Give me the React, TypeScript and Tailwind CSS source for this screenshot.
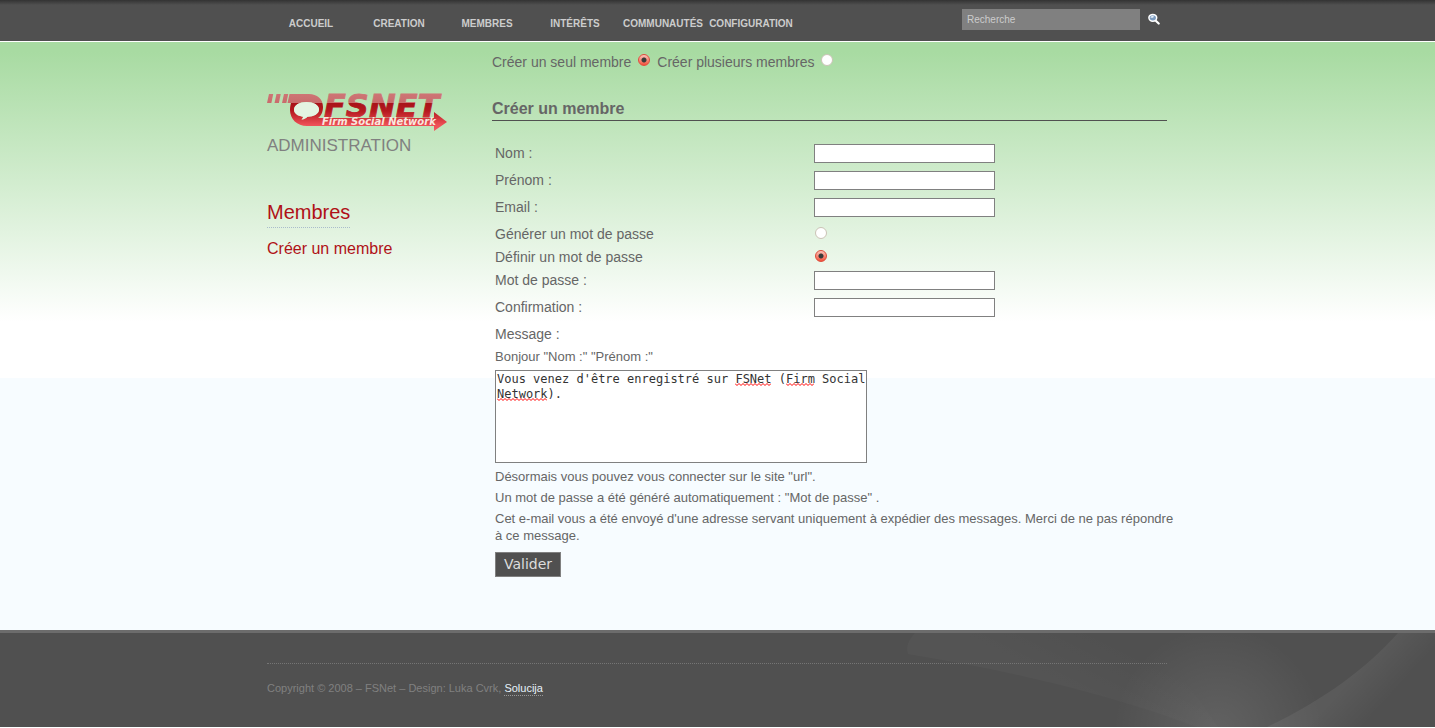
import React, { useState } from "react";

const navItems = ["Accueil", "Creation", "Membres", "Intérêts", "Communautés", "Configuration"];

const radioClass =
  "block size-3 shrink-0 cursor-pointer appearance-none rounded-full border border-[#cbc3b6] bg-white checked:border-[#dc4a38] checked:bg-[radial-gradient(circle_at_center,#3a3a3a_0_2px,transparent_3px),linear-gradient(#fbc4ba,#f4523c)]";

const fieldClass = "h-[19px] w-full max-w-[181px] border border-[#808080] bg-white px-1 text-[13px] outline-none";

function Logo() {
  return (
    <svg viewBox="0 0 180 40" className="block h-10 w-[180px]" role="img" aria-label="FSNet">
      <defs>
        <linearGradient id="brand" gradientUnits="userSpaceOnUse" x1="0" y1="0" x2="0" y2="40">
          <stop offset="0" stopColor="#cf7878" />
          <stop offset="0.29" stopColor="#c96c6c" />
          <stop offset="0.3" stopColor="#a81219" />
          <stop offset="0.5" stopColor="#b5191f" />
          <stop offset="0.85" stopColor="#ee5057" />
          <stop offset="1" stopColor="#f05a60" />
        </linearGradient>
      </defs>
      <g fill="url(#brand)">
        <path d="M2 3H6.200L4.400 12H0Z" />
        <path d="M9.500 3H13.700L11.900 12H7.500Z" />
        <path d="M17 3H21.200L19.400 12H15Z" />
        <path
          fillRule="evenodd"
          d="M22.500 3H42C50 3 56 8 56 16C56 21 54 25 51 27H167V21L180 31L167 40V35H40C30 35 23 28 23 19C23 16 23.500 14 24 12H20.500ZM39.500 11C32.500 11 27 14 27 18.500C27 22.500 30.500 25 36 25.700C36 27 35.500 27.500 34.500 28.500C37.500 28.300 39 27.200 40.500 25.800C47 25.500 52 22.800 52 18.500C52 14 46.500 11 39.500 11Z"
        />
        <text x="57" y="26" fontSize="32" fontWeight="bold" fontStyle="italic" fontFamily="'DejaVu Sans', sans-serif" stroke="url(#brand)" strokeWidth="0.8">
          FSNET
        </text>
      </g>
      <path
        d="M39.500 11C32.500 11 27 14 27 18.500C27 22.500 30.500 25 36 25.700C36 27 35.500 27.500 34.500 28.500C37.500 28.300 39 27.200 40.500 25.800C47 25.500 52 22.800 52 18.500C52 14 46.500 11 39.500 11Z"
        fill="#e4f4e2"
      />
      <text x="55" y="34" fontSize="10" fontWeight="bold" fontStyle="italic" fontFamily="'DejaVu Sans', sans-serif" fill="#f9e6df">
        Firm Social Network
      </text>
    </svg>
  );
}

function SearchIcon() {
  return (
    <svg viewBox="0 0 12 12" className="block size-3" aria-hidden="true">
      <path d="M7.500 7.500L10.700 10.500" stroke="#fff" strokeWidth="2.200" strokeLinecap="round" />
      <ellipse cx="4.800" cy="4.800" rx="3.900" ry="3.400" fill="#7d9cc0" stroke="#fff" strokeWidth="1.500" />
      <path d="M2.500 4.800C2.700 3.400 4 2.600 5.800 2.900L5.200 4.800Z" fill="#e6eff9" />
    </svg>
  );
}

function Squiggle({ className, width }: { className: string; width: number }) {
  const points = Array.from({ length: width / 2 + 1 }, (_, i) => `${i * 2},${i % 2 ? 2.5 : 0.5}`).join(" ");
  return (
    <svg width={width} height="3" className={`pointer-events-none absolute ${className}`} aria-hidden="true">
      <polyline points={points} fill="none" stroke="#f00" strokeWidth="1" />
    </svg>
  );
}

function TextRow({ id, label, type = "text" }: { id: string; label: string; type?: string }) {
  return (
    <div className="grid grid-cols-[319px_1fr] py-1">
      <label htmlFor={id} className="leading-[18px]">{label}</label>
      <input id={id} type={type} className={fieldClass} />
    </div>
  );
}

function RadioRow({ id, label, checked, onSelect }: { id: string; label: string; checked: boolean; onSelect: () => void }) {
  return (
    <div className="grid h-[23px] grid-cols-[319px_1fr] pt-1">
      <label htmlFor={id} className="leading-[18px]">{label}</label>
      <div className="pt-0.5 pl-px">
        <input id={id} name="password-mode" type="radio" checked={checked} onChange={onSelect} className={radioClass} />
      </div>
    </div>
  );
}

export default function App() {
  const [count, setCount] = useState("one");
  const [mode, setMode] = useState("define");
  const [message, setMessage] = useState("Vous venez d'être enregistré sur FSNet (Firm Social Network).");

  return (
    <div className="bg-white font-['Liberation_Sans',Arial,sans-serif] text-sm text-[#666]">
      <header className="border-b border-white bg-[linear-gradient(#333,#505050_5px)]">
        <div className="mx-auto flex h-[41px] max-w-[901px] justify-between">
          <nav className="flex pt-4">
            {navItems.map((item) => (
              <a key={item} href="#" className="flex w-[88px] justify-center text-[10px] leading-4 font-bold whitespace-nowrap text-[#ccc] uppercase">
                {item}
              </a>
            ))}
          </nav>
          <form className="flex items-start gap-2 pt-[9px] pr-2" onSubmit={(e) => e.preventDefault()}>
            <input
              type="text"
              aria-label="Recherche"
              placeholder="Recherche"
              className="h-[21px] w-[178px] bg-[#808080] px-[5px] text-[10px] text-white outline-none placeholder:text-[#ccc]"
            />
            <button type="submit" aria-label="Rechercher" className="pt-1">
              <SearchIcon />
            </button>
          </form>
        </div>
      </header>

      <div className="bg-[linear-gradient(#a8dba2_0,#a8dba2_10px,#fff_280px,#fff_336px,#f7fcff_336px)]">
        <div className="mx-auto flex max-w-[901px] pr-px pb-[53px]">
          <aside className="w-[225px] shrink-0 pt-[49px]">
            <Logo />
            <p className="mt-[5px] text-[17px] leading-5 text-[#808080]">ADMINISTRATION</p>
            <h2 className="mt-[43px]">
              <a href="#" className="inline-block border-b border-dotted border-[#a9bccb] pb-0.5 text-xl leading-[26px] text-[#b01117]">Membres</a>
            </h2>
            <a href="#" className="mt-[11px] block text-base leading-5 text-[#b01117]">Créer un membre</a>
          </aside>

          <main className="min-w-0 flex-1">
            <div className="flex h-10 items-start gap-[7px] pt-[11px] leading-[18px]">
              <label htmlFor="one">Créer un seul membre</label>
              <input id="one" name="count" type="radio" className={`mt-px ${radioClass}`} checked={count === "one"} onChange={() => setCount("one")} />
              <label htmlFor="many">Créer plusieurs membres</label>
              <input id="many" name="count" type="radio" className={`mt-px ${radioClass}`} checked={count === "many"} onChange={() => setCount("many")} />
            </div>

            <h1 className="mt-[17px] border-b border-[#505050] pb-px text-base leading-5 font-bold">Créer un membre</h1>

            <form className="px-[3px] pt-[19px]" onSubmit={(e) => e.preventDefault()}>
              <TextRow id="nom" label="Nom :" />
              <TextRow id="prenom" label="Prénom :" />
              <TextRow id="email" label="Email :" type="email" />
              <RadioRow id="generate" label="Générer un mot de passe" checked={mode === "generate"} onSelect={() => setMode("generate")} />
              <RadioRow id="define" label="Définir un mot de passe" checked={mode === "define"} onSelect={() => setMode("define")} />
              <TextRow id="password" label="Mot de passe :" type="password" />
              <TextRow id="confirm" label="Confirmation :" type="password" />
              <label htmlFor="message" className="block pt-1 leading-[18px]">Message :</label>
              <div className="-mr-4 text-[13px] leading-[17px]">
                <p className="pt-[5px]">Bonjour "Nom :" "Prénom :"</p>
                <div className="relative mt-[5px] max-w-[372px]">
                  <textarea
                    id="message"
                    value={message}
                    onChange={(e) => setMessage(e.target.value)}
                    spellCheck={false}
                    className="block h-[93px] w-full resize-none overflow-hidden border border-[#808080] bg-white pt-px pl-px font-['DejaVu_Sans_Mono',monospace] text-[12px] leading-[15px] text-[#333] outline-none"
                  />
                  <Squiggle width={36} className="top-[13px] left-[240px]" />
                  <Squiggle width={28} className="top-[13px] left-[291px]" />
                  <Squiggle width={50} className="top-[28px] left-[2px]" />
                </div>
                <p className="mt-[5px]">Désormais vous pouvez vous connecter sur le site "url".</p>
                <p className="mt-1">Un mot de passe a été généré automatiquement : "Mot de passe" .</p>
                <p className="mt-1">
                  Cet e-mail vous a été envoyé d'une adresse servant uniquement à expédier des messages. Merci de ne pas répondre à ce message.
                </p>
              </div>
              <button type="submit" className="mt-2 block h-[25px] border border-[#808080] bg-[#505050] px-2 pb-0.5 font-['DejaVu_Sans',sans-serif] text-sm leading-5 text-[#ddd]">
                Valider
              </button>
            </form>
          </main>
        </div>
      </div>

      <footer className="relative h-[97px] overflow-hidden border-t-[3px] border-[#6c6c6c] bg-[#505050]">
        <svg viewBox="0 0 535 94" className="absolute top-0 right-0 h-[94px] w-[535px]" aria-hidden="true">
          <defs>
            <radialGradient id="glow" gradientUnits="userSpaceOnUse" cx="318" cy="98" r="105">
              <stop offset="0" stopColor="#fff" stopOpacity="0.1" />
              <stop offset="1" stopColor="#fff" stopOpacity="0" />
            </radialGradient>
            <linearGradient id="beam" gradientUnits="userSpaceOnUse" x1="440" y1="55" x2="472" y2="84">
              <stop offset="0" stopColor="#fff" stopOpacity="0.06" />
              <stop offset="1" stopColor="#fff" stopOpacity="0" />
            </linearGradient>
            <linearGradient id="sweep" gradientUnits="userSpaceOnUse" x1="150" y1="50" x2="180" y2="-10">
              <stop offset="0" stopColor="#fff" stopOpacity="0.025" />
              <stop offset="1" stopColor="#fff" stopOpacity="0" />
            </linearGradient>
          </defs>
          <path d="M8 21C120 39 230 66 325 105C290 50 260 15 230 0H15C8 8 6 14 8 21Z" fill="url(#sweep)" />
          <circle cx="318" cy="98" r="105" fill="url(#glow)" />
          <path d="M367 94C422 68 466 36 498 0H535V94Z" fill="url(#beam)" />
        </svg>
        <div className="relative mx-auto max-w-[901px] pt-[30px] pr-px">
          <div className="border-t border-dotted border-[#757575] pt-[17px] text-[11px] leading-[14px] text-[#808080]">
            Copyright © 2008 – FSNet – Design: Luka Cvrk,{" "}
            <a href="#" className="inline-block border-b border-dotted border-[#999] text-[#e6f2fa]">Solucija</a>
          </div>
        </div>
      </footer>
    </div>
  );
}
